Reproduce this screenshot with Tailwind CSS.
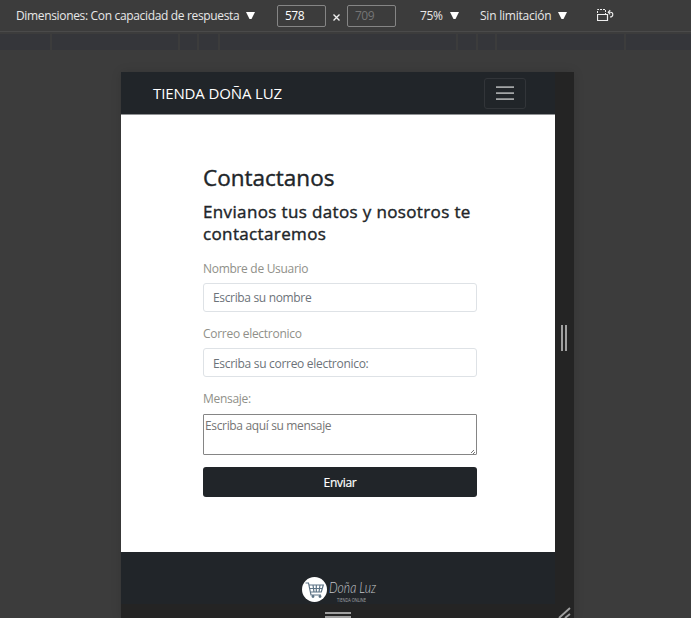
<!DOCTYPE html>
<html lang="es">
<head>
<meta charset="utf-8">
<title>Tienda Doña Luz</title>
<script src="https://cdn.jsdelivr.net/npm/@tailwindcss/browser@4"></script>
</head>
<body class="w-[691px] h-[618px] overflow-hidden bg-[#3c3c3c] font-['Open_Sans','Noto_Sans',sans-serif] flex flex-col">
  <header class="h-8 shrink-0 flex items-center border-b border-[#4a4a4a] text-[12px] text-[#e8e8e8] whitespace-nowrap pl-4">
    <div class="w-[230px] shrink-0"><span class="tracking-[-0.34px]">Dimensiones: Con capacidad de respuesta</span></div>
    <svg class="w-[9px] h-[7px] shrink-0" viewBox="0 0 9 7"><path d="M0 0h9L5.5 7h-2z" fill="#fff"/></svg>
    <div class="ml-[22px] w-[49px] h-[22px] shrink-0 border border-[#858585] rounded-[2px] pl-[7px] leading-[20px] text-white tracking-[-0.5px]">578</div>
    <svg class="ml-[7px] mt-[3px] size-[7px] shrink-0" viewBox="0 0 7 7"><path d="M.5.5l6 6m0-6l-6 6" stroke="#f0f0f0" stroke-width="1.4"/></svg>
    <div class="ml-[7px] w-[49px] h-[22px] shrink-0 border border-[#858585] rounded-[2px] pl-[7px] leading-[20px] text-[#757575] tracking-[-0.5px]">709</div>
    <div class="ml-6 w-[30px] shrink-0 tracking-[-0.4px]">75%</div>
    <svg class="w-[9px] h-[7px] shrink-0" viewBox="0 0 9 7"><path d="M0 0h9L5.5 7h-2z" fill="#fff"/></svg>
    <div class="ml-[21px] w-[78px] shrink-0"><span class="tracking-[-0.22px]">Sin limitación</span></div>
    <svg class="w-[9px] h-[7px] shrink-0" viewBox="0 0 9 7"><path d="M0 0h9L5.5 7h-2z" fill="#fff"/></svg>
    <svg class="ml-[30px] mb-px w-[17px] h-[13px] shrink-0" viewBox="0 0 17 13" fill="none" stroke="#eee">
      <path d="M.5 5.5h10v6H.5z" stroke-width="1.2"/>
      <path d="M.5 4V.5h8V5" stroke-dasharray="2 1"/>
      <path d="M11.5 3.3h2.2c1.5 0 2.1 1 2.1 2.1 0 1.4-.8 2.6-2.8 2.6M13.2 1.2l-2 2.1 2 2" stroke-width="1.1"/>
    </svg>
  </header>
  <div class="mt-[2px] h-4 shrink-0 bg-[#35363a] flex">
    <div class="w-[52px] border-r-2 border-[#3c3c3c]"></div>
    <div class="w-[128px] border-r-2 border-[#3c3c3c]"></div>
    <div class="w-[19px] border-r-2 border-[#3c3c3c]"></div>
    <div class="w-[21px] border-r-2 border-[#3c3c3c]"></div>
    <div class="w-[238px] border-r-2 border-[#3c3c3c]"></div>
    <div class="w-[20px] border-r-2 border-[#3c3c3c]"></div>
    <div class="w-[19px] border-r-2 border-[#3c3c3c]"></div>
    <div class="w-[129px] border-r-2 border-[#3c3c3c]"></div>
  </div>
  <div class="ml-[121px] mt-[22px] w-[453px] h-[546px] shrink-0 bg-[#242424] flex flex-col shadow-[0_0_10px_rgba(0,0,0,0.12)]">
    <div class="flex h-[532px]">
      <div class="w-[434px] shrink-0 flex flex-col">
        <nav class="h-[42px] shrink-0 bg-[#212529] flex items-center justify-between pl-8 pr-[29px]">
          <span class="text-[15px] text-white whitespace-nowrap tracking-[-0.13px]">TIENDA DOÑA LUZ</span>
          <button class="w-[42px] h-[31px] border border-[#323539] rounded-[3px] flex flex-col gap-[4px] items-center justify-center">
            <span class="w-[18px] h-[2px] bg-[#838688] border-b border-[#a3a5a6]"></span>
            <span class="w-[18px] h-[2px] bg-[#838688] border-b border-[#a3a5a6]"></span>
            <span class="w-[18px] h-[2px] bg-[#838688] border-b border-[#a3a5a6]"></span>
          </button>
        </nav>
        <main class="h-[438px] shrink-0 bg-white border-t border-[#909294] pl-[82px] pr-[78px] pt-[48px] text-[12px]">
          <h1 class="text-[22.5px] leading-[29px] font-medium text-[#212529] [-webkit-text-stroke:0.4px_#212529]">Contactanos</h1>
          <h2 class="mt-[9px] w-[280px] text-[17px] leading-[22px] font-medium text-[#212529] [-webkit-text-stroke:0.4px_#212529] tracking-[0.36px] whitespace-nowrap">Envianos tus datos y nosotros te<br>contactaremos</h2>
          <div class="mt-[15px] h-[18px] leading-[18px] text-[#909089] tracking-[-0.3px]">Nombre de Usuario</div>
          <div class="mt-[5px] h-[29px] border border-[#dee2e6] rounded-[3px] pl-[9px] leading-[27px] text-[#6c7379] tracking-[-0.34px]">Escriba su nombre</div>
          <div class="mt-[13px] h-[18px] leading-[18px] text-[#909089] tracking-[-0.28px]">Correo electronico</div>
          <div class="mt-[5px] h-[29px] border border-[#dee2e6] rounded-[3px] pl-[9px] leading-[29px] text-[#6c7379] tracking-[-0.3px]">Escriba su correo electronico:</div>
          <div class="mt-[13px] h-[18px] leading-[18px] text-[#909089] tracking-[-0.3px]">Mensaje:</div>
          <div class="mt-[6px] h-[41px] border border-[#858585] rounded-[1px] pl-px pt-[2px] pr-px leading-[18px] text-[#757575] flex justify-between tracking-[-0.35px]">
            <span>Escriba aquí su mensaje</span>
            <svg class="self-end size-[4px]" viewBox="0 0 4 4"><path d="M0 3L3 0M2 4l2-2" stroke="#777"/></svg>
          </div>
          <div class="mt-[12px] h-[30px] bg-[#212529] rounded-[3px] text-white text-center leading-[31px] tracking-[-0.3px] [-webkit-text-stroke:0.2px_white]">Enviar</div>
        </main>
        <footer class="h-[52px] shrink-0 bg-[#212529] flex pl-[181px] pt-[24px]">
          <svg class="w-[90px] h-[28px] overflow-visible" viewBox="0 0 90 28">
            <circle cx="12.5" cy="13.5" r="12.5" fill="#fff"/>
            <path d="M3.5 7h3l2.5 12h10M7.3 9h14l-2 7H9M8 12.5h12M11 9l1 7M14.3 9v7M18 9l-1 7" fill="none" stroke="#5d7385" stroke-width="1.2"/>
            <circle cx="11" cy="20.5" r="1.4" fill="#5d7385"/><circle cx="18" cy="20.5" r="1.4" fill="#5d7385"/>
            <text x="27" y="17" textLength="47" lengthAdjust="spacingAndGlyphs" font-family="Lato" font-style="italic" font-weight="300" font-size="16" fill="#c4c7c9">Doña Luz</text>
            <text x="35" y="26" textLength="29" lengthAdjust="spacingAndGlyphs" font-family="Open Sans" font-size="4.5" fill="#a5a8aa">TIENDA ONLINE</text>
          </svg>
        </footer>
      </div>
      <div class="w-[19px] flex gap-[2px] pl-[6px] pt-[253px]">
        <span class="w-[2px] h-[26px] bg-[#a0a0a0]"></span>
        <span class="w-[2px] h-[26px] bg-[#a0a0a0]"></span>
      </div>
    </div>
    <div class="h-[14px] flex justify-between pl-[204px] pr-[3px]">
      <div class="pt-[8px] flex flex-col gap-[2px]"><span class="w-[26px] h-[2px] bg-[#a0a0a0]"></span><span class="w-[26px] h-[2px] bg-[#a0a0a0]"></span></div>
      <svg class="mt-[3px] w-[13px] h-[11px]" viewBox="0 0 13 11"><path d="M1 11L12 1M7 11l5-4" stroke="#a0a0a0" stroke-width="1.9"/></svg>
    </div>
  </div>
</body>
</html>
